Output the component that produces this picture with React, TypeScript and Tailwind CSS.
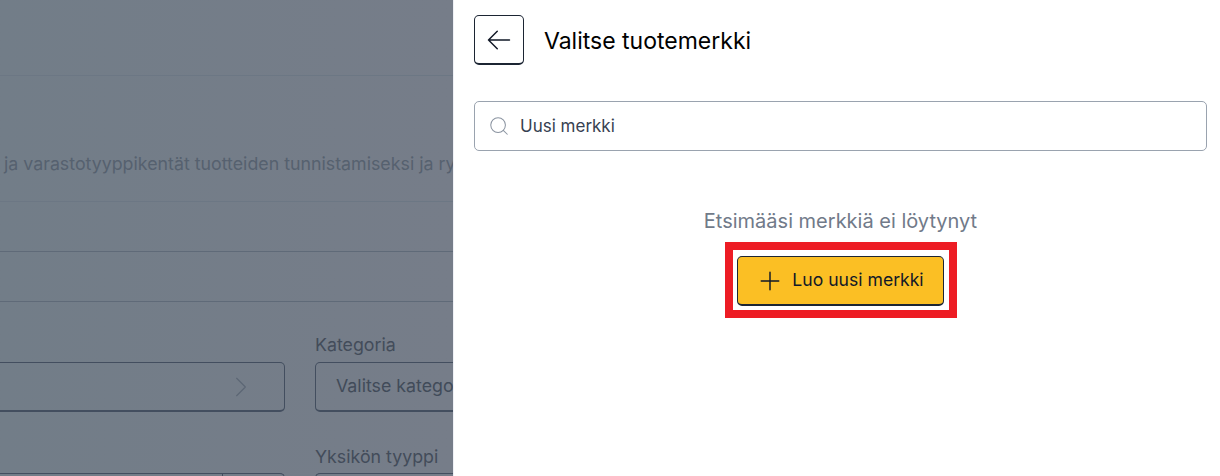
import { Search } from 'lucide-react';
import { HiOutlineArrowLeft, HiOutlineChevronRight, HiOutlinePlus } from 'react-icons/hi2';

const font = { fontFamily: "Inter, 'Liberation Sans', sans-serif" };

function BackgroundPage() {
  return (
    <div className="w-[453px] h-[476px] shrink-0 overflow-hidden bg-gradient-to-r from-[#727d88] to-[#767d89]">
      <div className="h-[76px] border-b border-[#6c7784]" />
      <div className="h-[126px] border-b border-[#6c7784] flex items-start pt-[76px] pl-1 whitespace-nowrap text-[17.8px] leading-6 text-[#56616f]">
        ja varastotyyppikentät tuotteiden tunnistamiseksi ja ryhmittelemiseksi
      </div>
      <div className="h-[50px] border-b border-[#5f6a78]" />
      <div className="h-[50px] border-b border-[#5f6a78]" />
      <div className="flex gap-[30px] pt-[31px]">
        <div className="w-[285px] shrink-0">
          <div className="h-[24px]" />
          <div className="mt-[5px] h-[50px] rounded-[5px] rounded-l-none border border-l-0 border-b-2 border-[#434e5f] flex items-center justify-end pr-[29px]">
            <HiOutlineChevronRight size={28} strokeWidth={1} className="text-[#5d6775]" />
          </div>
          <div className="h-[24px] mt-[33px]" />
          <div className="mt-[4px] h-[50px] rounded-tr-[5px] border-t border-r border-[#434e5f] flex justify-end">
            <div className="w-[62px] border-l border-[#434e5f]" />
          </div>
        </div>
        <div className="w-[300px] shrink-0">
          <div className="h-[24px] text-[17.8px] leading-6 text-[#434c5a]">Kategoria</div>
          <div className="mt-[5px] h-[50px] rounded-[5px] border border-b-2 border-[#434e5f] flex items-center pl-5 text-[17.8px] text-[#414b59]">
            Valitse kategoria
          </div>
          <div className="h-[24px] mt-[33px] text-[17.8px] leading-6 text-[#434c5a]">Yksikön tyyppi</div>
          <div className="mt-[4px] h-[50px] rounded-t-[5px] border-t border-l border-[#434e5f]" />
        </div>
      </div>
    </div>
  );
}

function BrandPanel() {
  return (
    <div className="flex-1 h-[476px] bg-white border-l border-[#eef0f5] pl-5 pr-[13px] pt-[15px]">
      <div className="flex items-center gap-5">
        <button className="w-[50px] h-[50px] rounded-[5px] border border-b-2 border-[#1c2533] flex items-center justify-center text-[#111827]">
          <HiOutlineArrowLeft size={28} strokeWidth={1.25} />
        </button>
        <h2 className="mt-[2px] text-[23px] leading-8 font-normal text-black">Valitse tuotemerkki</h2>
      </div>

      <div className="mt-[36px] h-[50px] rounded-[5px] border border-[#9aa3af] flex items-center pl-[13px] gap-[10px]">
        <Search size={22} strokeWidth={1.1} className="text-[#8a93a0]" />
        <span className="mt-[2px] text-[17px] text-[#374151]">Uusi merkki</span>
      </div>

      <div className="mt-[56px] flex flex-col items-center">
        <p className="text-[20px] leading-7 text-[#717a89]">Etsimääsi merkkiä ei löytynyt</p>
        <div className="mt-[7px] border-[8px] border-[#ed1c24] pl-1 pr-[5px] pt-[6px] pb-1">
          <button className="w-[207px] h-[50px] rounded-[5px] border border-b-2 border-[#1c2533] bg-[#fbbf24] flex items-center justify-center gap-[8px] text-[17.6px] font-normal text-[#111827]">
            <HiOutlinePlus size={28} strokeWidth={1.25} />
            Luo uusi merkki
          </button>
        </div>
      </div>
    </div>
  );
}

export default function App() {
  return (
    <div className="flex w-[1220px] h-[476px] overflow-hidden" style={font}>
      <BackgroundPage />
      <BrandPanel />
    </div>
  );
}
